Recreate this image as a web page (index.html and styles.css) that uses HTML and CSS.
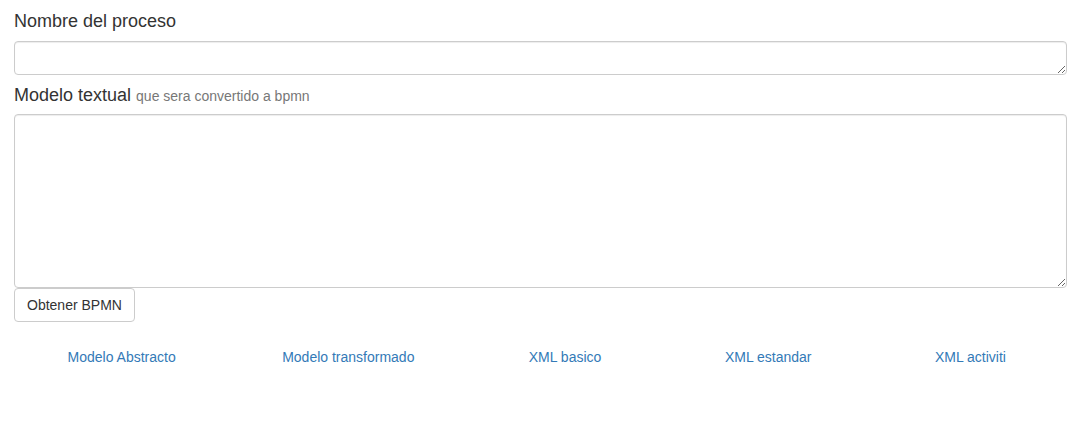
FILE: index.html
```html
<!DOCTYPE html>
<html lang="es">
<head>
<meta charset="utf-8">
<title>Proceso</title>
<link rel="stylesheet" href="styles.css">
</head>
<body>
<div class="container">
  <h4 class="label label-first">Nombre del proceso</h4>
  <textarea class="form-control" rows="1"></textarea>
  <h4 class="label label-second">Modelo textual <small>que sera convertido a bpmn</small></h4>
  <textarea class="form-control" rows="8"></textarea>
  <div class="actions">
    <button class="btn" type="button">Obtener BPMN</button>
  </div>
  <ul class="nav">
    <li><a href="#">Modelo Abstracto</a></li>
    <li><a href="#">Modelo transformado</a></li>
    <li><a href="#">XML basico</a></li>
    <li><a href="#">XML estandar</a></li>
    <li><a href="#">XML activiti</a></li>
  </ul>
</div>
</body>
</html>
```

FILE: styles.css
```css
* { box-sizing: border-box; }
html, body {
  margin: 0;
  background: #fff;
  font-family: "Liberation Sans", Arial, Helvetica, sans-serif;
  font-size: 14px;
  line-height: 1.42857143;
  color: #333;
}
.container {
  padding: 0 16px 0 14px;
  width: 1083px;
}
.label {
  font-size: 18px;
  font-weight: 500;
  line-height: 1.1;
  margin: 10px 0;
}
.label-first { margin: 12px 0 9px; }
.label-second { margin: 11px 0 8px; }
.label small {
  font-size: 14px;
  color: #777;
  font-weight: normal;
}
.form-control {
  display: block;
  width: 100%;
  padding: 6px 12px;
  font-family: inherit;
  font-size: 14px;
  line-height: 20px;
  color: #555;
  background: #fff;
  border: 1px solid #ccc;
  border-radius: 4px;
  box-shadow: inset 0 1px 1px rgba(0,0,0,.075);
  margin: 0;
}
.actions { display: flex; }
.btn {
  display: inline-block;
  margin: 0;
  padding: 6px 12px;
  font-family: inherit;
  font-size: 14px;
  line-height: 20px;
  color: #333;
  background: #fff;
  border: 1px solid #ccc;
  border-radius: 4px;
}
.nav {
  list-style: none;
  margin: 15px 0 0;
  padding: 0;
  display: grid;
  grid-template-columns: 215fr 238fr 195fr 211fr 193fr;
}
.nav li { text-align: center; }
.nav a {
  display: block;
  padding: 10px 15px;
  color: #337ab7;
  text-decoration: none;
}
```
